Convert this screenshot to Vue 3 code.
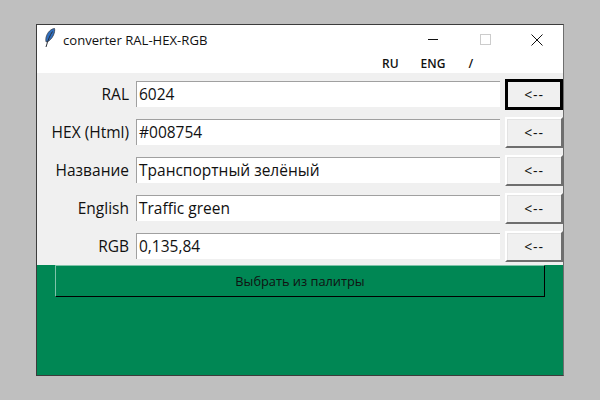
<script setup>
const rows = [
  { label: 'RAL', value: '6024', focused: true },
  { label: 'HEX (Html)', value: '#008754' },
  { label: 'Название', value: 'Транспортный зелёный' },
  { label: 'English', value: 'Traffic green' },
  { label: 'RGB', value: '0,135,84' },
]
</script>

<template>
  <div class="page">
    <div class="window">
      <div class="titlebar">
        <svg class="feather" width="12" height="20" viewBox="0 0 12 20">
          <path d="M10.500 .5C7 1 3.500 4 2.200 9c-.5 2-.5 3.500 0 5C5 13.500 8 10.500 9.500 7 10.500 4.500 11 2 10.500 .5Z" fill="#2f6fc0" stroke="#3d4656" stroke-width=".9" />
          <path d="M8.500 3.500C6 7 4 12 2 19" fill="none" stroke="#2b2f38" stroke-width="1" />
        </svg>
        <span class="title">converter RAL-HEX-RGB</span>
        <div class="controls">
          <span class="ctl"><i class="min"></i></span>
          <span class="ctl"><i class="max"></i></span>
          <span class="ctl">
            <svg width="12" height="12" viewBox="0 0 12 12"><path d="M.5 .5l11 11M11.500 .5l-11 11" stroke="#111" stroke-width="1" fill="none" /></svg>
          </span>
        </div>
      </div>
      <div class="menu">
        <span class="m-ru">RU</span>
        <span class="m-eng">ENG</span>
        <span class="m-sl">/</span>
      </div>
      <div class="panel">
        <div v-for="r in rows" :key="r.label" class="row">
          <span class="label">{{ r.label }}</span>
          <div class="entry">{{ r.value }}</div>
          <button class="btn" :class="{ focused: r.focused }">&lt;--</button>
        </div>
      </div>
      <div class="green">
        <button class="palette">Выбрать из палитры</button>
      </div>
    </div>
  </div>
</template>

<style>
body { margin: 0; }
</style>

<style scoped>
.page {
  width: 600px;
  height: 400px;
  background: #bfbfbf;
  padding: 24px 0 0 36px;
  box-sizing: border-box;
  font-family: "Open Sans", "Noto Sans", sans-serif;
  overflow: hidden;
}
.window {
  width: 528px;
  height: 352px;
  box-sizing: border-box;
  border: 1px solid #3c3c3c;
  border-right-color: #6e6e6e;
  display: flex;
  flex-direction: column;
  background: #fff;
}
.titlebar {
  height: 29px;
  display: flex;
  align-items: center;
  padding-left: 7px;
  flex: none;
}
.feather { flex: none; margin-top: -4px; }
.title {
  margin-left: 7px;
  font-size: 13.100px;
  font-weight: 500;
  color: #111;
}
.controls { margin-left: auto; display: flex; height: 29px; }
.ctl {
  width: 52px;
  display: flex;
  align-items: center;
  justify-content: center;
}
.ctl i { display: block; }
.min { width: 10px; height: 1px; background: #111; }
.max { width: 9px; height: 9px; border: 1px solid #ccc; }
.menu {
  height: 19px;
  flex: none;
  display: flex;
  align-items: center;
  font-size: 12px;
  font-weight: 600;
  color: #111;
  padding-left: 345px;
}
.m-eng { margin-left: 22px; }
.m-sl { margin-left: 23px; }
.panel {
  height: 192px;
  flex: none;
  background: #f0f0f0;
  box-sizing: border-box;
  padding-top: 8px;
  display: flex;
  flex-direction: column;
  gap: 12px;
}
.row {
  height: 26px;
  display: flex;
  align-items: center;
  flex: none;
}
.label {
  width: 92px;
  text-align: right;
  font-size: 15.500px;
  line-height: 28px;
  color: #111;
  flex: none;
}
.entry {
  margin-left: 7px;
  width: 364px;
  height: 26px;
  box-sizing: border-box;
  background: #fff;
  border-top: 1px solid #a0a0a0;
  border-left: 1px solid #a0a0a0;
  padding-left: 2px;
  font-size: 15.500px;
  line-height: 25px;
  color: #111;
  flex: none;
}
.btn {
  margin-left: 5px;
  width: 58px;
  height: 31px;
  flex: none;
  box-sizing: border-box;
  background: #f0f0f0;
  border: 2px solid;
  border-color: #fff #6e6e6e #6e6e6e #fff;
  box-shadow: inset 1px 1px 0 #e3e3e3;
  font-family: inherit;
  font-size: 14px;
  font-weight: 500;
  letter-spacing: .8px;
  color: #111;
  padding: 0;
}
.btn.focused {
  border: 3px solid #000;
  box-shadow: none;
}
.green {
  flex: 1;
  background: #008754;
  padding-left: 18px;
}
.palette {
  display: block;
  width: 490px;
  height: 32px;
  box-sizing: border-box;
  background: #008754;
  border: 1px solid;
  border-color: #7fc3a9 #000 #000 #7fc3a9;
  font-family: inherit;
  font-size: 12.800px;
  color: #111;
  padding: 0;
}
</style>
